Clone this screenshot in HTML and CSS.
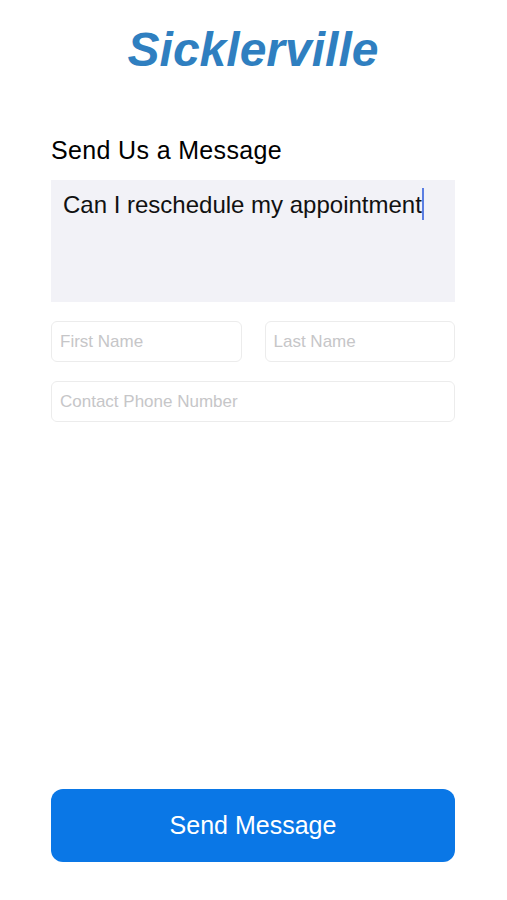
FILE: index.html
```html
<!DOCTYPE html>
<html lang="en">
<head>
    <meta charset="UTF-8">
    <meta name="viewport" content="width=device-width, initial-scale=1.0">
    <title>Sicklerville - Send Us a Message</title>
    <link rel="stylesheet" href="styles.css">
</head>
<body>
    <div class="page">
        <h1 class="brand">Sicklerville</h1>

        <h2 class="section-title">Send Us a Message</h2>
        <div class="message-box">Can I reschedule my appointment<span class="caret"></span></div>

        <div class="name-row">
            <input class="field" type="text" placeholder="First Name">
            <input class="field" type="text" placeholder="Last Name">
        </div>
        <input class="field phone" type="tel" placeholder="Contact Phone Number">

        <button class="send-btn">Send Message</button>
    </div>
</body>
</html>
```

FILE: styles.css
```css
/* contact form screen */
* {
    box-sizing: border-box;
}
body {
    margin: 0;
    background-color: #fff;
    font-family: "Liberation Sans", Arial, sans-serif;
    color: #000;
}
.page {
    min-height: 100vh;
    display: flex;
    flex-direction: column;
    padding: 26px 52px 38px 51px;
}
.brand {
    margin: 0;
    text-align: center;
    font-size: 48px;
    line-height: 48px;
    font-weight: bold;
    font-style: italic;
    color: #2f7fc0;
}
.section-title {
    margin: 61px 0 15px;
    font-size: 25px;
    line-height: 30px;
    font-weight: normal;
    letter-spacing: 0.35px;
}
.message-box {
    height: 122px;
    padding: 8px 12px 0;
    background-color: #f2f2f7;
    font-size: 24px;
    line-height: 34px;
    color: #111;
}
.caret {
    display: inline-block;
    width: 2px;
    height: 32px;
    margin-left: 0;
    vertical-align: -7px;
    background-color: #5b7ee2;
}
.name-row {
    display: grid;
    grid-template-columns: 1fr 1fr;
    gap: 23px;
    margin-top: 19px;
}
.field {
    display: block;
    width: 100%;
    height: 41px;
    padding: 0 8px;
    border: 1px solid #ececec;
    border-radius: 6px;
    font-family: "Liberation Sans", Arial, sans-serif;
    font-size: 17px;
    color: #000;
    background-color: #fff;
    outline: none;
}
.field::placeholder {
    color: #c6c6c8;
}
.phone {
    margin-top: 19px;
}
.send-btn {
    margin-top: auto;
    height: 73px;
    border: none;
    border-radius: 12px;
    background-color: #0a77e6;
    color: #fff;
    font-family: "Liberation Sans", Arial, sans-serif;
    font-size: 25px;
    cursor: pointer;
}
```
